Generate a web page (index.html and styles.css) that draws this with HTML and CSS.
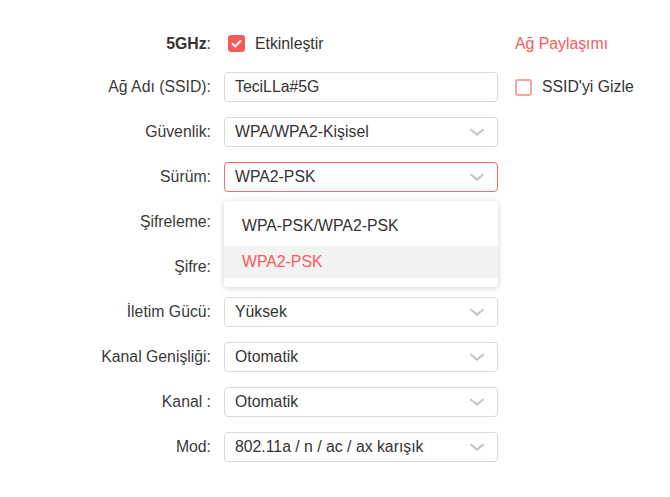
FILE: index.html
```html
<!DOCTYPE html>
<html lang="tr">
<head>
<meta charset="utf-8">
<link rel="stylesheet" href="styles.css">
</head>
<body>
<div class="page">
  <div class="form">
    <div class="row row-first">
      <div class="label"><b>5GHz</b>:</div>
      <div class="field check-field">
        <span class="checkbox checked"><svg viewBox="0 0 17 17" width="17" height="17"><path d="M4.6 8.8 L7.4 11.4 L12.4 6" fill="none" stroke="#fff" stroke-width="2" stroke-linecap="round" stroke-linejoin="round"/></svg></span>
        <span class="check-text">Etkinleştir</span>
      </div>
    </div>
    <div class="row">
      <div class="label">Ağ Adı (SSID):</div>
      <div class="field box">TeciLLa#5G</div>
    </div>
    <div class="row">
      <div class="label">Güvenlik:</div>
      <div class="field box select">WPA/WPA2-Kişisel<svg class="chev" viewBox="0 0 16 8" width="16" height="8"><path d="M1.5 1.2 L8 6.6 L14.5 1.2" fill="none" stroke="#c4c4c4" stroke-width="2"/></svg></div>
    </div>
    <div class="row">
      <div class="label">Sürüm:</div>
      <div class="field box select active">WPA2-PSK<svg class="chev" viewBox="0 0 16 8" width="16" height="8"><path d="M1.5 1.2 L8 6.6 L14.5 1.2" fill="none" stroke="#c4c4c4" stroke-width="2"/></svg>
        <div class="dropdown">
          <div class="opt">WPA-PSK/WPA2-PSK</div>
          <div class="opt selected">WPA2-PSK</div>
        </div>
      </div>
    </div>
    <div class="row">
      <div class="label">Şifreleme:</div>
      <div class="field box select"></div>
    </div>
    <div class="row">
      <div class="label">Şifre:</div>
      <div class="field box"></div>
    </div>
    <div class="row">
      <div class="label">İletim Gücü:</div>
      <div class="field box select">Yüksek<svg class="chev" viewBox="0 0 16 8" width="16" height="8"><path d="M1.5 1.2 L8 6.6 L14.5 1.2" fill="none" stroke="#c4c4c4" stroke-width="2"/></svg></div>
    </div>
    <div class="row">
      <div class="label">Kanal Genişliği:</div>
      <div class="field box select">Otomatik<svg class="chev" viewBox="0 0 16 8" width="16" height="8"><path d="M1.5 1.2 L8 6.6 L14.5 1.2" fill="none" stroke="#c4c4c4" stroke-width="2"/></svg></div>
    </div>
    <div class="row">
      <div class="label">Kanal :</div>
      <div class="field box select">Otomatik<svg class="chev" viewBox="0 0 16 8" width="16" height="8"><path d="M1.5 1.2 L8 6.6 L14.5 1.2" fill="none" stroke="#c4c4c4" stroke-width="2"/></svg></div>
    </div>
    <div class="row">
      <div class="label">Mod:</div>
      <div class="field box select">802.11a / n / ac / ax karışık<svg class="chev" viewBox="0 0 16 8" width="16" height="8"><path d="M1.5 1.2 L8 6.6 L14.5 1.2" fill="none" stroke="#c4c4c4" stroke-width="2"/></svg></div>
    </div>
  </div>
  <div class="side">
    <div class="side-row row-first"><span class="link">Ağ Paylaşımı</span></div>
    <div class="side-row">
      <span class="checkbox"></span>
      <span class="check-text">SSID'yi Gizle</span>
    </div>
  </div>
</div>
</body>
</html>
```

FILE: styles.css
```css
* { box-sizing: border-box; }
html, body {
  margin: 0;
  background: #fff;
}
body {
  font-family: "Liberation Sans", Arial, sans-serif;
  font-size: 15.8px;
  color: #333;
}
.page {
  display: flex;
  padding-top: 30px;
}
.form {
  display: flex;
  flex-direction: column;
  gap: 15px;
}
.row {
  display: grid;
  grid-template-columns: 211px 274px;
  column-gap: 13px;
  align-items: center;
  height: 30px;
}
.row-first { height: 27px; }
.label {
  text-align: right;
  color: #3a3a3a;
  white-space: nowrap;
}
.label b { font-weight: bold; color: #333; }
.field {
  height: 30px;
  position: relative;
}
.check-field {
  display: flex;
  align-items: center;
  height: 27px;
  padding-left: 4px;
}
.checkbox {
  width: 17px;
  height: 17px;
  border: 2px solid #f9a3a3;
  border-radius: 3px;
  display: inline-block;
  flex: none;
  background: #fff;
}
.checkbox.checked {
  background: #f65b5b;
  border: none;
}
.checkbox svg { display: block; }
.check-text {
  margin-left: 10px;
  color: #333;
}
.box {
  border: 1px solid #d9d9d9;
  border-radius: 4px;
  display: flex;
  align-items: center;
  padding: 0 12px 0 10px;
  white-space: nowrap;
}
.select { justify-content: space-between; }
.box.active { border-color: #f56a6a; }
.chev { flex: none; }
.dropdown {
  position: absolute;
  top: 38px;
  left: -1px;
  right: -1px;
  background: #fff;
  border-radius: 4px;
  box-shadow: 0 1px 6px rgba(0, 0, 0, 0.18);
  padding: 9px 0;
  z-index: 5;
}
.opt {
  height: 32px;
  display: flex;
  align-items: center;
  padding-left: 18px;
  color: #333;
}
.opt + .opt { margin-top: 4px; }
.opt.selected {
  background: #f2f2f2;
  color: #f65b5b;
}
.side {
  display: flex;
  flex-direction: column;
  gap: 15px;
  margin-left: 17px;
}
.side-row {
  height: 30px;
  display: flex;
  align-items: center;
}
.side-row.row-first { height: 27px; }
.link { color: #f65b5b; }
```
